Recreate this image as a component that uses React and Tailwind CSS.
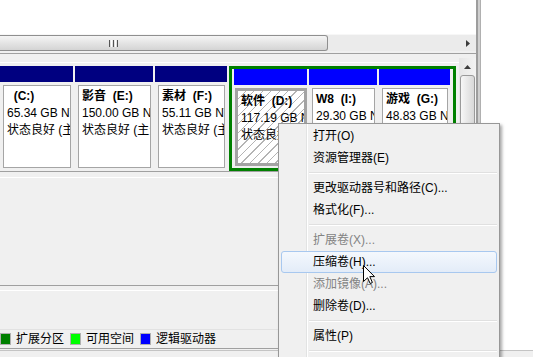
import React from 'react';

const FONT = "font-['Liberation_Sans','Noto_Sans_CJK_SC',sans-serif]";

function Volume({ w, bar, name, letter, size, status, selected, pb }) {
  return (
    <div className={`${w} ${pb} shrink-0 flex flex-col`}>
      <div className={`h-[16px] ${bar}`} />
      <div
        className={
          selected
            ? 'mt-[3px] ml-[1px] flex-1 overflow-hidden border-[3px] border-[#a3a3a3] bg-[repeating-linear-gradient(135deg,#ffffff_0px,#ffffff_5px,#b4b4b4_5px,#b4b4b4_6px)]'
            : 'mt-[3px] ml-[3px] mr-[2px] flex-1 overflow-hidden border border-[#a5a5a5] bg-white'
        }
      >
        <div className="pl-[3px] pt-[2px] leading-[17px] whitespace-nowrap text-black">
          <div className="font-bold whitespace-pre">{`${name}  (${letter}:)`}</div>
          <div className="whitespace-pre">{size}</div>
          <div className="whitespace-pre">{status}</div>
        </div>
      </div>
    </div>
  );
}

function MenuItem({ children, disabled, active }) {
  return (
    <div
      className={`h-[22px] flex items-center pl-[31px] rounded-[3px] border ${
        active
          ? 'border-[#a8c8ef] bg-linear-to-b from-[#f4f8fd] to-[#e3ecf8]'
          : 'border-transparent'
      } ${disabled ? 'text-[#838383]' : 'text-black'}`}
    >
      {children}
    </div>
  );
}

function MenuSep() {
  return (
    <div className="h-[8px] flex flex-col justify-center ml-[28px]">
      <div className="h-[1px] bg-[#e0e0e0]" />
      <div className="h-[1px] bg-white" />
    </div>
  );
}

function Swatch({ color, label }) {
  return (
    <div className="flex items-center gap-[5px] mr-[6px]">
      <div className={`w-[11px] h-[12px] border border-[#b0b0b0] ${color}`} />
      <span>{label}</span>
    </div>
  );
}

export default function App() {
  return (
    <div className={`relative w-[533px] h-[357px] overflow-hidden bg-white flex flex-col text-[12px] ${FONT}`}>
      <div className="flex flex-1 min-h-0">
        {/* main console pane */}
        <div className="w-[476px] shrink-0 flex flex-col bg-[#f0f0f0]">
          {/* volume list (scrolled) */}
          <div className="h-[34px] bg-white" />
          <div className="h-[17px] flex bg-[#ebebeb] border-t border-[#f7f7f7]">
            <div className="w-[328px] h-full rounded-r-[3px] border border-l-0 border-[#8f8f8f] bg-linear-to-b from-[#f5f5f5] to-[#d4d4d4] flex items-center">
              <div className="ml-[109px] flex gap-[1px]">
                <div className="w-[1px] h-[7px] bg-[#555]" />
                <div className="w-[1px] h-[7px] bg-white" />
                <div className="w-[1px] h-[7px] bg-[#555]" />
                <div className="w-[1px] h-[7px] bg-white" />
                <div className="w-[1px] h-[7px] bg-[#555]" />
              </div>
            </div>
            <div className="flex-1" />
            <div className="w-[17px] flex items-center justify-center">
              <svg width="4" height="7" viewBox="0 0 4 7">
                <path d="M0 0 L4 3.5 L0 7 Z" fill="#3c3c3c" />
              </svg>
            </div>
          </div>
          <div className="h-[2px]" />
          <div className="h-[1px] bg-[#a0a0a0]" />
          <div className="h-[4px]" />

          {/* graphical view */}
          <div className="flex flex-1 min-h-0">
            <div className="w-[459px] shrink-0 flex flex-col">
              <div className="h-[4px]" />
              <div className="h-[1px] bg-white" />
              <div className="h-[3px]" />
              <div className="h-[106px] flex gap-[2px] border-b border-[#a0a0a0]">
                <Volume w="w-[73px]" pb="pb-[3px]" bar="bg-[#000080]" name="" letter="C" size="65.34 GB NTFS" status="状态良好 (主分区)" />
                <Volume w="w-[78px]" pb="pb-[3px]" bar="bg-[#000080]" name="影音" letter="E" size="150.00 GB NTFS" status="状态良好 (主分区)" />
                <Volume w="w-[72px]" pb="pb-[3px]" bar="bg-[#000080]" name="素材" letter="F" size="55.11 GB NTFS" status="状态良好 (主分区)" />
                <div className="w-[227px] shrink-0 border-[3px] border-[#008000] flex gap-[2px] pl-[2px] pr-[3px]">
                  <Volume w="w-[73px]" pb="pb-[2px]" bar="bg-[#0000ff]" name="软件" letter="D" size="117.19 GB NTFS" status="状态良好 (逻辑驱动器)" selected />
                  <Volume w="w-[68px]" pb="pb-[2px]" bar="bg-[#0000ff]" name="W8" letter="I" size="29.30 GB NTFS" status="状态良好 (逻辑驱动器)" />
                  <Volume w="w-[71px]" pb="pb-[2px]" bar="bg-[#0000ff]" name="游戏" letter="G" size="48.83 GB NTFS" status="状态良好 (逻辑驱动器)" />
                </div>
              </div>
              <div className="h-[5px]" />
              <div className="h-[1px] bg-white" />
              <div className="h-[107px]" />
              <div className="h-[1px] bg-[#a0a0a0]" />
              <div className="h-[4px]" />
              <div className="h-[1px] bg-white" />
              <div className="flex-1" />
            </div>
            {/* vertical scrollbar */}
            <div className="w-[17px] shrink-0 flex flex-col bg-linear-to-r from-[#e6e6e6] to-[#f3f3f3]">
              <div className="h-[17px] flex items-center justify-center">
                <svg width="7" height="4" viewBox="0 0 7 4">
                  <path d="M0 4 L3.5 0 L7 4 Z" fill="#3c3c3c" />
                </svg>
              </div>
              <div className="mx-[1px] h-[200px] rounded-[3px] border border-[#9a9a9a] bg-linear-to-r from-[#f7f7f7] to-[#d8d8d8]" />
            </div>
          </div>

          {/* legend */}
          <div className="h-[19px] border-t border-[#e2e2e2] flex items-center text-black">
            <Swatch color="bg-[#008000]" label="扩展分区" />
            <Swatch color="bg-[#00ff00]" label="可用空间" />
            <Swatch color="bg-[#0000ff]" label="逻辑驱动器" />
          </div>
          <div className="h-[1px] bg-[#a0a0a0]" />
          <div className="h-[1px]" />
        </div>
        {/* splitter + side pane */}
        <div className="w-[5px] shrink-0 border-l-2 border-[#9d9d9d] bg-[#cfcfcf] border-r border-r-[#b0b0b0]" />
        <div className="flex-1 bg-white" />
      </div>
      {/* status bar */}
      <div className="h-[7px] shrink-0 border-t border-[#c4c4c4] bg-[#f0f0f0]" />

      {/* context menu */}
      <div className="absolute left-[278px] top-[123px] w-[222px] h-[260px] border border-[#979797] pt-[1px] px-[2px] shadow-[2px_2px_3px_rgba(0,0,0,0.35)] bg-[linear-gradient(to_right,#f0f0f0_27px,#e2e3e3_27px,#e2e3e3_28px,#ffffff_28px,#ffffff_29px,#f0f0f0_29px)]">
        <MenuItem>打开(O)</MenuItem>
        <MenuItem>资源管理器(E)</MenuItem>
        <MenuSep />
        <MenuItem>更改驱动器号和路径(C)...</MenuItem>
        <MenuItem>格式化(F)...</MenuItem>
        <MenuSep />
        <MenuItem disabled>扩展卷(X)...</MenuItem>
        <MenuItem active>压缩卷(H)...</MenuItem>
        <MenuItem disabled>添加镜像(A)...</MenuItem>
        <MenuItem>删除卷(D)...</MenuItem>
        <MenuSep />
        <MenuItem>属性(P)</MenuItem>
        <MenuSep />
        <MenuItem>帮助(H)</MenuItem>
      </div>

      {/* mouse pointer */}
      <svg className="absolute left-[363px] top-[265px]" width="12" height="19" viewBox="0 0 12 19">
        <path d="M0.5 0.5 L0.5 16.5 L4.5 12.8 L7.2 18.5 L9.4 17.5 L6.8 11.6 L11.5 11.6 Z" fill="#ffffff" stroke="#000000" strokeWidth="1" strokeLinejoin="miter" />
      </svg>
    </div>
  );
}
